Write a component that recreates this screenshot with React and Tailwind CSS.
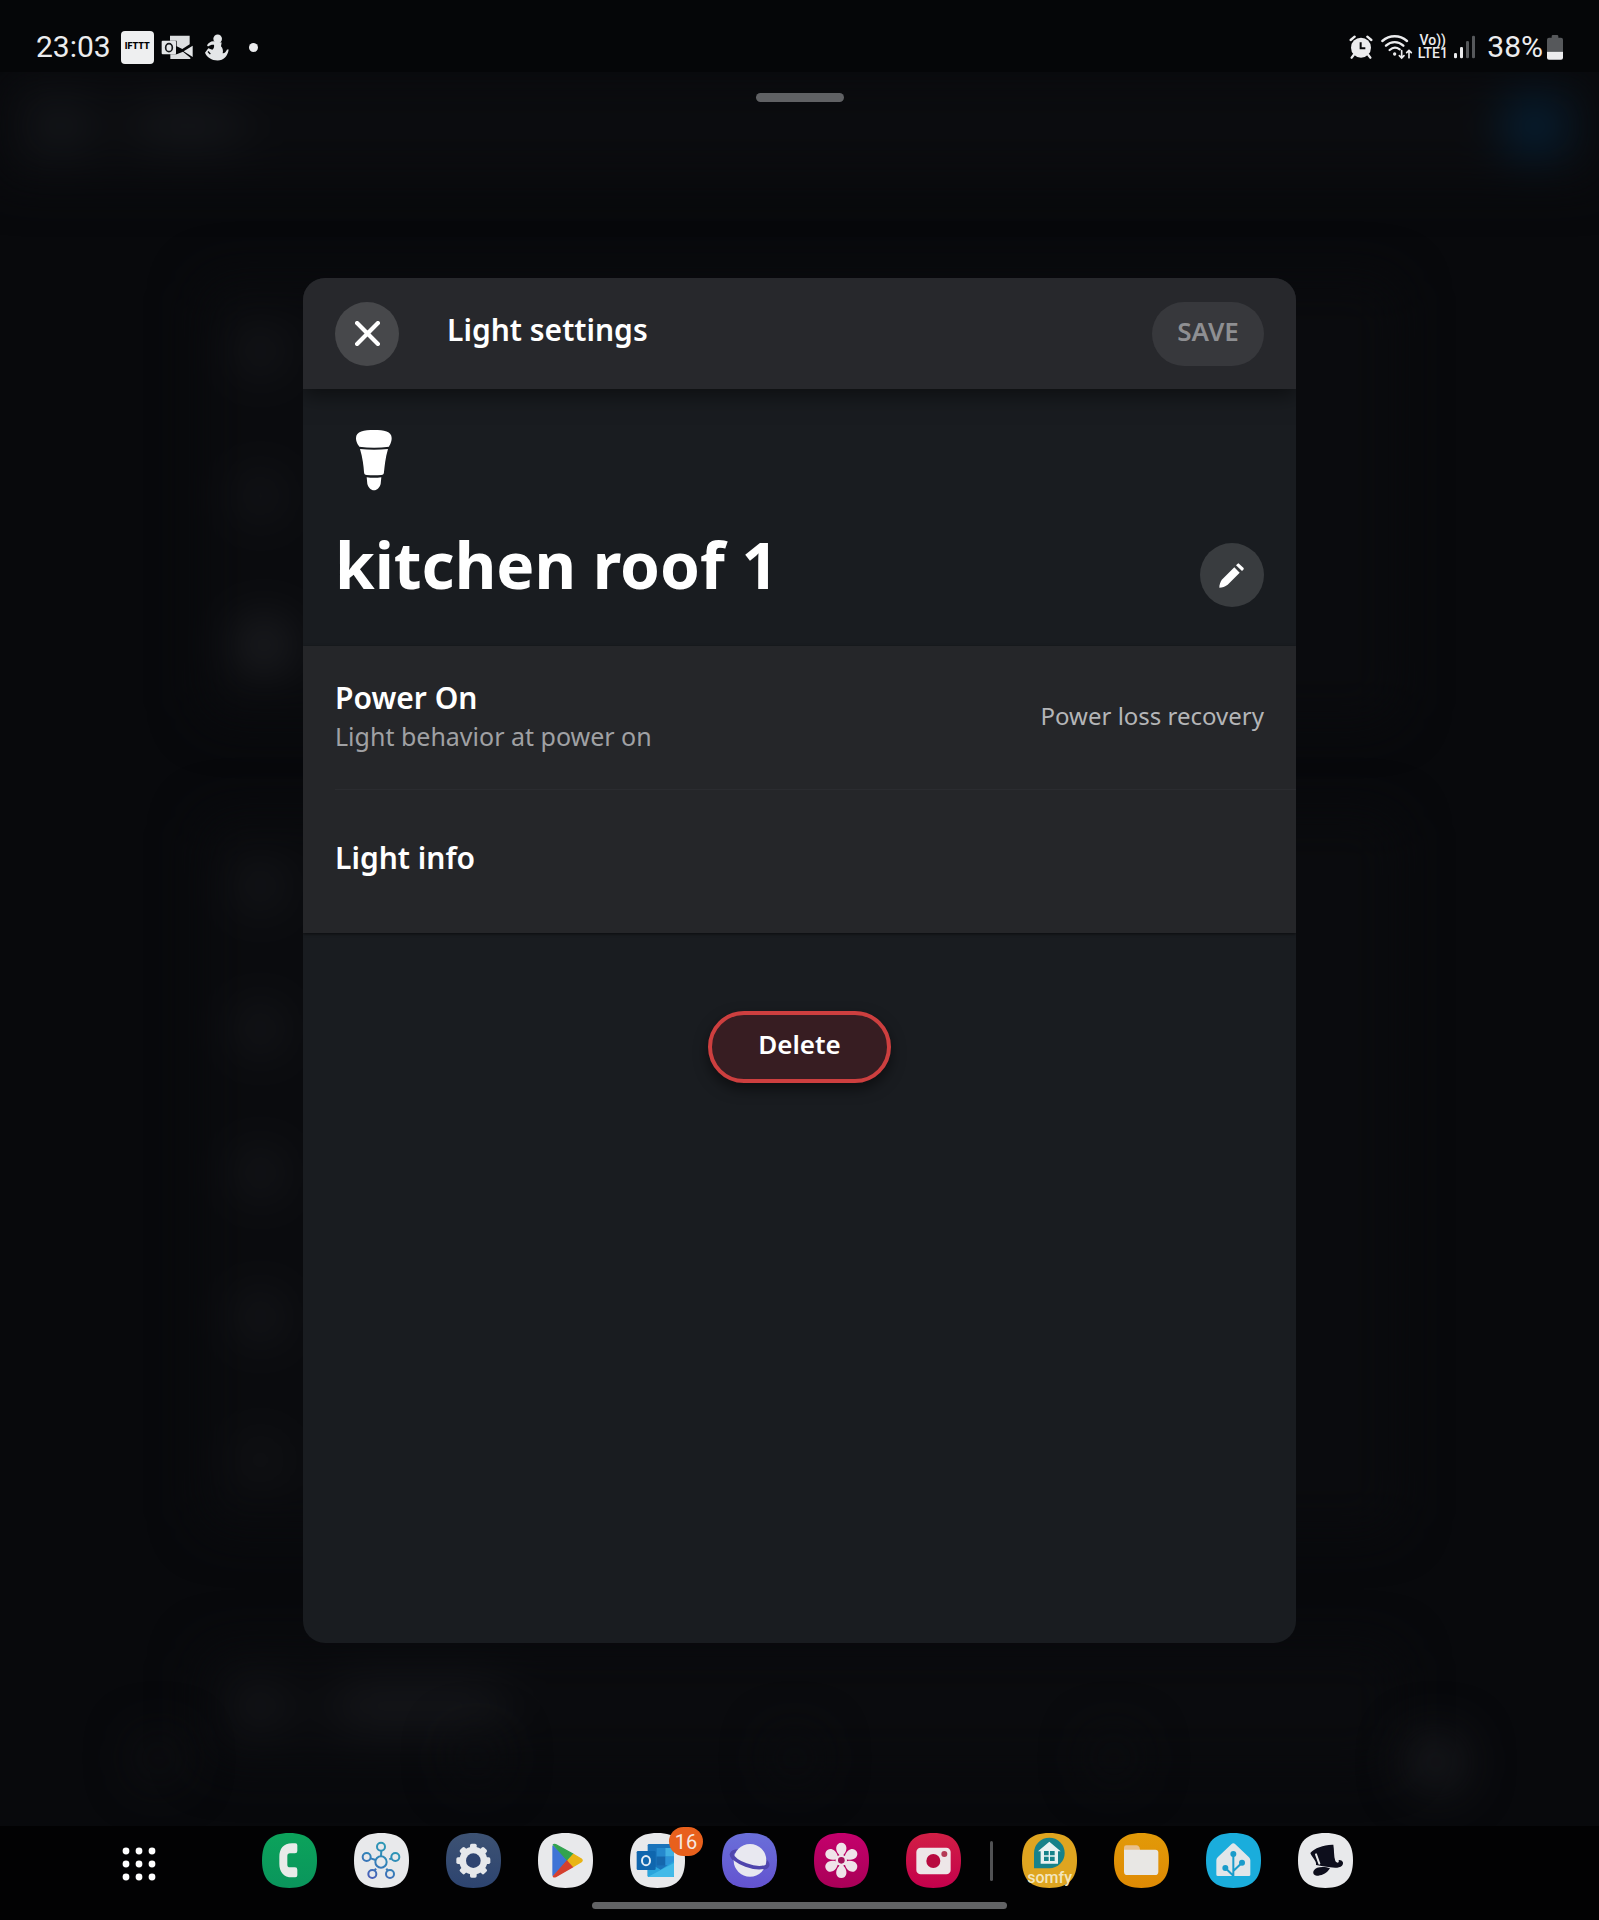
const SQUIRCLE =
  "M82 0 C139 0 165 26 165 82 S139 165 82 165 0 139 0 82 26 0 82 0Z";

function AppIcon({ label, from, to, badge, children }) {
  const id = `bg-${label.replace(/\s/g, "")}`;
  return (
    <button type="button" aria-label={label} className="relative size-[55px] shrink-0">
      <svg viewBox="0 0 165 165" className="size-full">
        <defs>
          <linearGradient id={id} x1="0" y1="0" x2="0" y2="1">
            <stop offset="0" stopColor={from} />
            <stop offset="1" stopColor={to || from} />
          </linearGradient>
        </defs>
        <path d={SQUIRCLE} fill={`url(#${id})`} />
        {children}
      </svg>
      {badge && (
        <span className="absolute -top-1.5 left-[39px] flex h-[29px] w-[34px] items-center justify-center rounded-full bg-[#e8601c] text-xl text-[#f6e9e2]">
          {badge}
        </span>
      )}
    </button>
  );
}

function StatusBar() {
  return (
    <header className="flex h-[72px] items-center bg-[#050608] px-9 pt-[22px] font-[Roboto,sans-serif] text-[#ececee]">
      <span className="text-[30px] leading-9">23:03</span>
      <span className="ml-2.5 flex size-[33px] items-center justify-center rounded-[4px] bg-[#eeeff0] text-[9px] font-black text-black">
        IFTTT
      </span>
      {/* Outlook */}
      <svg viewBox="0 0 96 75" className="ml-[7px] h-[25px] w-8">
        <path d="M27 2H86V28L64 42 47 34V17H27Z" fill="#dddfe1" />
        <path d="M28 58H47L66 50 88 68V72H28Z" fill="#dddfe1" />
        <path d="M95 32V66L68 49Z" fill="#e4e6e8" />
        <rect x="2" y="17" width="43" height="41" rx="3" fill="#e4e6e8" />
        <ellipse cx="24" cy="38" rx="10" ry="12" fill="none" stroke="#16181b" strokeWidth="5" />
      </svg>
      {/* Sitting figure */}
      <svg viewBox="0 0 72 80" className="ml-3 h-[27px] w-6" fill="#e4e6e8">
        <circle cx="38" cy="14" r="13" />
        <path d="M28 22C18 20 12 26 6 33L9 37C16 32 22 31 27 32C28 38 27 43 22 47L10 42 0 56C6 70 20 79 38 79C56 79 68 66 71 46L66 46C63 54 58 58 53 57C55 50 54 42 48 36L50 25Z" />
        <path d="M9 52L16 60" stroke="#050608" strokeWidth="4" />
      </svg>
      <span className="ml-5 size-[9px] rounded-full bg-[#ececee]" />

      <div className="ml-auto flex items-center">
        {/* Alarm */}
        <svg viewBox="0 0 72 72" className="size-6" fill="#ececee">
          <circle cx="36" cy="38" r="30" />
          <path d="M5 15L17 5M67 15L55 5M14 60L8 68M58 60L64 68" stroke="#ececee" strokeWidth="7" strokeLinecap="round" />
          <path d="M35 22V40H49" fill="none" stroke="#08090b" strokeWidth="6" />
        </svg>
        {/* Wi-Fi with activity arrows */}
        <svg viewBox="0 0 96 75" className="ml-2 h-[25px] w-8" fill="none" stroke="#ececee" strokeWidth="7" strokeLinecap="round">
          <path d="M4 18C26 -1 56 -1 78 18M15 32C30 18 52 18 67 32M26 45C36 36 46 36 56 43" />
          <circle cx="41" cy="57" r="3" fill="#ececee" strokeWidth="4" />
          <path d="M62 47V68M55 62L62 69 69 62M84 68V47M77 53L84 46 91 53" strokeWidth="5" />
        </svg>
        <span className="ml-1 flex w-[31px] flex-col items-center text-sm leading-[13px] font-medium">
          <span>Vo))</span>
          <span>LTE1</span>
        </span>
        <svg viewBox="0 0 66 72" className="ml-[6px] h-6 w-[22px]">
          <rect x="0" y="54" width="9" height="16" rx="4" fill="#ececee" />
          <rect x="18" y="36" width="9" height="34" rx="4" fill="#ececee" />
          <rect x="36" y="18" width="9" height="52" rx="4" fill="#56585b" />
          <rect x="54" y="2" width="9" height="68" rx="4" fill="#56585b" />
        </svg>
        <span className="ml-[11px] text-[30px] leading-9">38%</span>
        <svg viewBox="0 0 48 75" className="ml-1 h-[25px] w-4">
          <path d="M14 8V4Q14 0 18 0H30Q34 0 34 4V8H42Q48 8 48 14V50H0V14Q0 8 6 8Z" fill="#56585b" />
          <path d="M0 50H48V68Q48 74 42 74H6Q0 74 0 68Z" fill="#ececee" />
        </svg>
      </div>
    </header>
  );
}

// The dimmed app that sits behind the dialog
function Backdrop() {
  return (
    <div aria-hidden="true" className="absolute inset-0 flex flex-col overflow-hidden bg-[#08090c]">
      <div className="flex h-[108px] items-center bg-[#0b0c0f] pr-8 pl-7 blur-xl">
        <div className="size-16 rounded-full bg-[#14161a]" />
        <div className="ml-10 h-9 w-28 rounded-full bg-[#16181c]" />
        <div className="ml-auto size-16 rounded-full bg-[#052036]" />
      </div>
      <div className="mx-auto mt-[98px] flex h-[444px] w-3/4 flex-col justify-around rounded-3xl bg-[#0a0b0e] px-9 blur-xl">
        <div className="size-12 rounded-full bg-[#17181c]" />
        <div className="size-12 rounded-full bg-[#15161a]" />
        <div className="size-14 rounded-full bg-[#1f2024]" />
      </div>
      <div className="mx-auto mt-[92px] flex h-[718px] w-3/4 flex-col justify-around rounded-3xl bg-[#0a0b0e] px-9 blur-xl">
        <div className="size-12 rounded-full bg-[#17181c]" />
        <div className="size-12 rounded-full bg-[#17181c]" />
        <div className="size-12 rounded-full bg-[#17181c]" />
        <div className="size-12 rounded-full bg-[#17181c]" />
        <div className="size-12 rounded-full bg-[#131417]" />
      </div>
      <div className="mx-auto mt-[114px] flex h-[120px] w-3/4 items-center rounded-3xl bg-[#0a0b0e] px-9 blur-xl">
        <div className="size-12 rounded-full bg-[#17181c]" />
        <div className="ml-12 h-12 w-44 rounded-full bg-[#15161a]" />
      </div>
      <div className="-mt-8 flex justify-around blur-xl">
        <div className="size-12 rounded-full bg-[#0f1013]" />
        <div className="size-12 rounded-full bg-[#0b0c0f]" />
        <div className="size-12 rounded-full bg-[#0b0c0f]" />
        <div className="size-12 rounded-full bg-[#0c0d10]" />
        <div className="size-14 rounded-full bg-[#1b1c20]" />
      </div>
    </div>
  );
}

function LightSettings() {
  return (
    <section
      role="dialog"
      aria-labelledby="dialog-title"
      className="relative mx-auto mt-[176px] mb-[183px] flex w-[62.1%] flex-1 flex-col overflow-hidden rounded-[22px] bg-[#191c20] font-['Noto_Sans',sans-serif] text-white"
    >
      <div className="relative flex h-[111px] items-center bg-[#27282c] px-8 shadow-[0_6px_20px_rgba(0,0,0,0.5)]">
        <button type="button" aria-label="Close" className="flex size-16 items-center justify-center rounded-full bg-[#47484b]">
          <svg viewBox="0 0 24 24" className="size-[25px]" stroke="white" strokeWidth="4" strokeLinecap="round">
            <path d="M2 2L22 22M22 2L2 22" />
          </svg>
        </button>
        <h1 id="dialog-title" className="ml-12 pb-2 text-[30px] leading-10 font-semibold">
          Light settings
        </h1>
        <button type="button" disabled className="ml-auto h-16 w-28 rounded-full bg-[#37383c] pb-1 text-[26px] font-semibold text-[#8e8f92]">
          SAVE
        </button>
      </div>

      <div className="px-8 pt-[41px] pb-[39px]">
        <svg viewBox="0 0 108 183" className="ml-[21px] h-[61px] w-9" fill="white">
          <path d="M54 0C84 0 107 4 107 24C107 38 101 45 99 50Q54 56 10 50C7 45 0 38 0 24C0 4 24 0 54 0Z" />
          <path d="M12 57Q54 62 96 57C88 84 86 108 84 126C84 132 81 135 76 135Q54 137 32 135C27 135 24 132 24 126C23 108 20 84 12 57Z" />
          <path d="M32 142Q54 145 76 142L74 162C71 172 63 181 54 181S37 172 34 162Z" />
        </svg>
        <div className="mt-[38px] flex items-start justify-between">
          <h2 className="text-[64px] leading-[72px] font-bold">kitchen roof 1</h2>
          <button type="button" aria-label="Rename" className="mt-3.5 flex size-16 items-center justify-center rounded-full bg-[#393c3f]">
            <svg viewBox="0 0 75 75" className="size-[25px]" fill="white">
              <path d="M46 13L62 29 26 65C18 71 10 74 1 74C1 65 4 56 10 49Z" />
              <path d="M56 2Q58 0 60 2L74 15Q75 18 73 20L69 24 51 7Z" />
            </svg>
          </button>
        </div>
      </div>

      <div className="bg-[#252629] shadow-[0_1px_3px_rgba(0,0,0,0.6)]">
        <button type="button" className="flex h-[143px] w-full items-center justify-between px-8 pb-1 text-left">
          <span className="flex flex-col">
            <span className="text-[30px] leading-10 font-semibold">Power On</span>
            <span className="text-[25px] leading-9 text-[#a0a1a4]">Light behavior at power on</span>
          </span>
          <span className="text-2xl leading-9 text-[#b4b5b7]">Power loss recovery</span>
        </button>
        <div className="ml-8 h-px bg-[#2b2c30]" />
        <button type="button" className="flex h-[143px] w-full items-center px-8 pb-2 text-left text-[30px] leading-10 font-semibold">
          Light info
        </button>
      </div>

      <div className="flex justify-center pt-[78px]">
        <button type="button" className="h-[72px] w-[183px] rounded-full border-4 border-[#cd3f3f] bg-[#371d22] pb-1.5 text-[26px] font-semibold shadow-[0_6px_14px_rgba(0,0,0,0.5)]">
          Delete
        </button>
      </div>
    </section>
  );
}

function Dock() {
  return (
    <nav className="relative bg-[#020203] font-[Roboto,sans-serif]">
      <div className="flex h-[76px] items-start gap-[37px] pt-[7px] pl-28">
        <button type="button" aria-label="All apps" className="mr-[58px] size-[55px] shrink-0">
          <svg viewBox="0 0 55 55" className="size-full" fill="white">
            {[18, 31, 44].map((y) =>
              [14, 27, 40].map((x) => <circle key={`${x}-${y}`} cx={x} cy={y} r="3.4" />)
            )}
          </svg>
        </button>

        <AppIcon label="Phone" from="#0ca35b" to="#0a955c">
          <path
            fill="#e8ebe9"
            d="M90 31H100Q106 31 106 37V54Q106 61 99 61H84Q76 61 76 69V95Q76 103 84 103H99Q106 103 106 110V127Q106 133 100 133H90C64 133 52 116 52 92V72C52 48 64 31 90 31Z"
          />
        </AppIcon>

        <AppIcon label="SmartThings" from="#e8e9eb">
          <defs>
            <linearGradient id="nodes" gradientUnits="userSpaceOnUse" x1="110" y1="30" x2="50" y2="135">
              <stop offset="0" stopColor="#2d9db4" />
              <stop offset="0.5" stopColor="#3084b8" />
              <stop offset="1" stopColor="#4a5fb8" />
            </linearGradient>
          </defs>
          <g fill="none" stroke="url(#nodes)" strokeWidth="6">
            <circle cx="81" cy="87" r="17" />
            <circle cx="81" cy="41" r="12" />
            <circle cx="38" cy="72" r="12" />
            <circle cx="124" cy="72" r="12" />
            <circle cx="55" cy="123" r="12" />
            <circle cx="108" cy="123" r="12" />
            <path d="M82 53L81 70M50 76L65 81M112 76L106 79M62 113L66 107M101 113L97 107" />
          </g>
        </AppIcon>

        <AppIcon label="Settings" from="#3d5273" to="#2d4470">
          <g fill="#e6e8eb">
            <circle cx="82" cy="83" r="42" />
            {[0, 45, 90, 135].map((a) => (
              <rect key={a} x="72" y="32" width="20" height="102" rx="5" transform={`rotate(${a} 82 83)`} />
            ))}
          </g>
          <circle cx="82" cy="83" r="22" fill="#2f4470" />
        </AppIcon>

        <AppIcon label="Play Store" from="#e8e9eb">
          <g strokeLinejoin="round" strokeWidth="4">
            <path d="M45 39L88 82 45 127Z" fill="#3e74d6" stroke="#3e74d6" />
            <path d="M46 35Q48 33 53 35L105 63 88 81Z" fill="#33a34f" stroke="#33a34f" />
            <path d="M46 130Q48 133 53 131L105 101 88 83Z" fill="#d4402f" stroke="#d4402f" />
            <path d="M106 64L130 78Q135 82 130 86L106 100 90 82Z" fill="#e9b413" stroke="#e9b413" />
          </g>
        </AppIcon>

        <AppIcon label="Outlook" from="#e8e9eb" badge="16">
          <rect x="53" y="33" width="79" height="99" rx="4" fill="#1a73bb" />
          <rect x="80" y="45" width="26" height="26" fill="#2589ce" />
          <rect x="106" y="45" width="26" height="26" fill="#41b1e3" />
          <rect x="80" y="71" width="26" height="26" fill="#1567ad" />
          <rect x="106" y="71" width="26" height="26" fill="#2b93d8" />
          <path d="M53 88L92 110 132 84V128Q132 132 128 132H57Q53 132 53 128Z" fill="#2aa5dc" />
          <path d="M53 132L132 90V128Q132 132 128 132Z" fill="#42bae8" />
          <rect x="20" y="54" width="57" height="57" rx="4" fill="#0f66ae" />
          <ellipse cx="48" cy="83" rx="12" ry="14" fill="none" stroke="#e4eef6" strokeWidth="6" />
        </AppIcon>

        <AppIcon label="Internet" from="#6a6fd9" to="#6353d0">
          <ellipse cx="83" cy="80" rx="57" ry="20" fill="none" stroke="#4f45ad" strokeWidth="10" transform="rotate(18 83 80)" />
          <circle cx="84" cy="82" r="49" fill="#e8e8f0" />
          <path d="M28 62C36 88 102 114 134 100" fill="none" stroke="#4f45ad" strokeWidth="11" />
        </AppIcon>

        <AppIcon label="Gallery" from="#c4006c" to="#a90057">
          <g fill="#efe3e9">
            {[0, 60, 120, 180, 240, 300].map((a) => (
              <path
                key={a}
                d="M82 82L76 66C60 50 66 29 82 29S104 50 88 66Z"
                transform={`rotate(${a} 82 82)`}
              />
            ))}
            <circle cx="82" cy="82" r="17" />
          </g>
          <circle cx="82" cy="82" r="10" fill="#a3135c" />
        </AppIcon>

        <AppIcon label="Camera" from="#d11f45" to="#c4004c">
          <rect x="31" y="44" width="103" height="80" rx="13" fill="#ede6e8" />
          <circle cx="82" cy="84" r="21" fill="#b8093f" />
          <circle cx="115" cy="63" r="9" fill="#b53a56" />
        </AppIcon>

        <span className="-mx-2 mt-2 h-10 w-[3px] rounded-full bg-[#515254]" />

        <AppIcon label="Somfy" from="#dfa520">
          <path d="M82 14A46 46 0 1 1 82 106H36V60A46 46 0 0 1 82 14Z" fill="#17828a" />
          <path d="M82 26L116 55H108V92H56V55H48Z" fill="#e9f2f2" />
          <path d="M66 54H80V67H66ZM84 54H98V67H84ZM66 71H80V84H66ZM84 71H98V84H84Z" fill="#17828a" />
          <text x="83" y="149" textAnchor="middle" fontSize="48" fontWeight="500" fill="#f3e6bd">
            somfy
          </text>
        </AppIcon>

        <AppIcon label="My Files" from="#e29a08" to="#df8a04">
          <path d="M30 44Q30 37 37 37H68Q73 37 76 43L80 56H30Z" fill="#e9c08c" />
          <path d="M30 50H124Q133 50 133 59V116Q133 126 123 126H40Q30 126 30 116Z" fill="#e8e7e4" />
        </AppIcon>

        <AppIcon label="Home Assistant" from="#1aaddc">
          <path d="M76 34Q82 27 88 34L129 73Q133 77 133 82V125Q133 129 129 129H36Q31 129 31 125V82Q31 77 35 73Z" fill="#e1e6e9" />
          <g stroke="#1a9ccb" strokeWidth="6" fill="#1a9ccb">
            <path d="M82 129V62M82 114L108 89M82 128L58 105" fill="none" />
            <circle cx="82" cy="63" r="6" />
            <circle cx="108" cy="89" r="6" />
            <circle cx="58" cy="105" r="6" />
          </g>
        </AppIcon>

        <AppIcon label="Magic Hat" from="#e8e9eb">
          <path
            fill="#0d0e1c"
            d="M37 60C50 45 78 34 106 35C109 50 107 70 112 84C118 92 124 90 122 81C134 80 139 90 132 98C124 106 108 104 96 103C82 101 68 99 54 96C57 84 42 74 37 60Z"
          />
          <path d="M54 64L64 92" stroke="#e8e9eb" strokeWidth="6" strokeLinecap="round" />
          <path d="M47 113C54 100 80 100 96 106C88 119 74 127 61 128C49 128 43 122 47 113Z" fill="#0d0e1c" />
        </AppIcon>
      </div>
      <div className="mx-auto mb-[11px] h-[7px] w-[26%] rounded-full bg-[#626365]" />
    </nav>
  );
}

export default function App() {
  return (
    <div className="flex min-h-screen flex-col bg-black">
      <StatusBar />
      <main className="relative flex flex-1 flex-col">
        <Backdrop />
        <div className="relative mx-auto mt-[21px] h-[9px] w-[88px] rounded-full bg-[#606164]" />
        <LightSettings />
      </main>
      <Dock />
    </div>
  );
}
